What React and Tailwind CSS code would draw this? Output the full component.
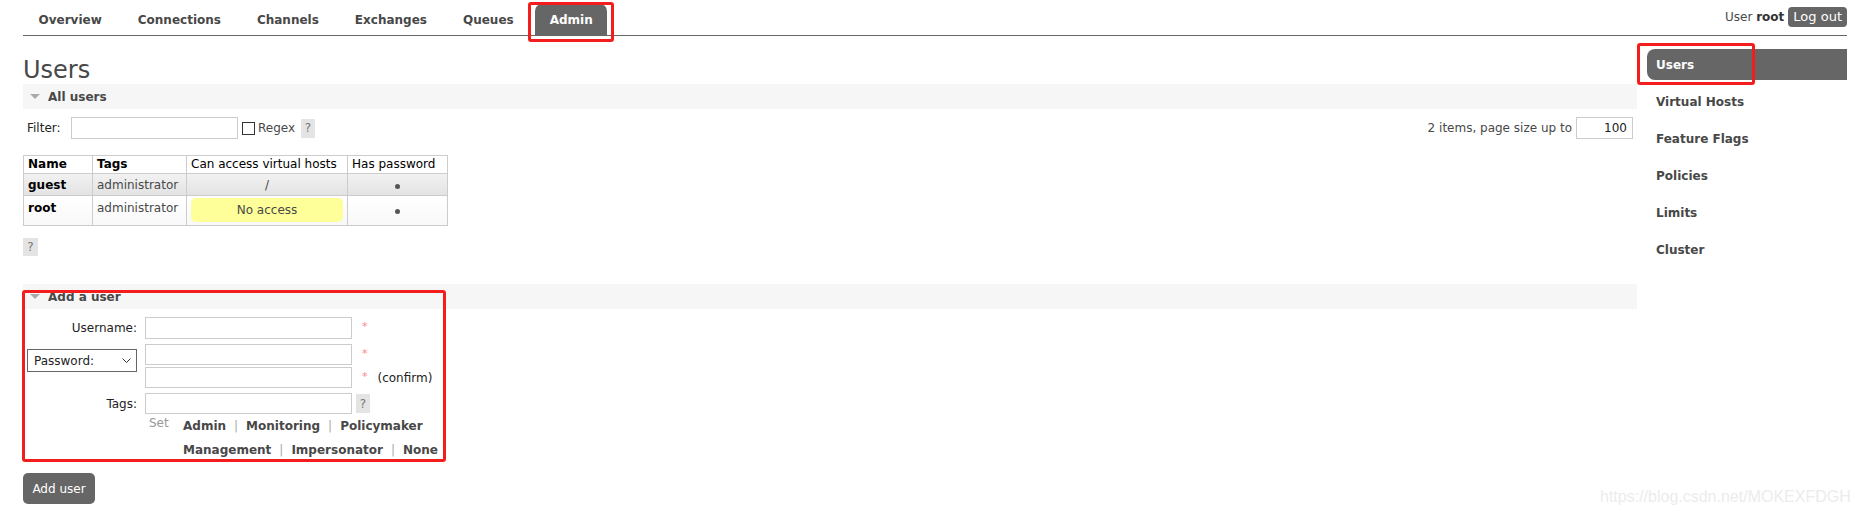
import React from "react";

const Help = ({ className = "" }) => (
  <span className={"inline-flex items-center justify-center bg-[#e4e4e4] text-[#777] text-[12px] " + className}>?</span>
);

const Triangle = () => (
  <svg width="10" height="6" viewBox="0 0 10 6" className="ml-[7px]">
    <polygon points="0,0 10,0 5,5" fill="#aaaaaa" />
  </svg>
);

const Mand = () => (
  <span className="self-start mt-[4px] ml-[10px] text-[#f88] text-[11px] leading-none">*</span>
);

const Dot = () => <span className="inline-block w-[5px] h-[5px] rounded-full bg-[#555]" />;

export default function App() {
  const tabs = ["Overview", "Connections", "Channels", "Exchanges", "Queues", "Admin"];
  const side = ["Virtual Hosts", "Feature Flags", "Policies", "Limits", "Cluster"];
  return (
    <div className="relative w-[1857px] h-[516px] overflow-hidden bg-white font-['DejaVu_Sans','Verdana',sans-serif] text-[12px] text-[#484848]">
      {/* header */}
      <div className="ml-[23px] mr-[10px] h-[36px] flex items-end justify-between border-b border-[#666]">
        <ul className="flex gap-[7px] ml-[1px]">
          {tabs.map((t) => (
            <li
              key={t}
              className={
                "h-[31px] px-[14.5px] flex items-center font-bold rounded-t-[7px] " +
                (t === "Admin" ? "bg-[#666] text-white" : "text-[#484848]")
              }
            >
              {t}
            </li>
          ))}
        </ul>
        <div className="mb-[8px] flex items-center gap-[4px]">
          <span>
            User <b className="text-[#333]">root</b>
          </span>
          <span className="h-[20px] px-[5px] flex items-center rounded-[4px] bg-[#666] text-white text-[13px]">Log out</span>
        </div>
      </div>

      <div className="flex">
        {/* main */}
        <div className="ml-[23px] w-[1614px]">
          <h1 className="mt-[20px] text-[24px] leading-[28px] font-normal text-[#484848]">Users</h1>
          <div className="h-[25px] bg-[#f6f6f6] flex items-center">
            <Triangle />
            <span className="ml-[8px] font-bold">All users</span>
          </div>

          <div className="mt-[8px] h-[22px] flex items-center justify-between">
            <div className="flex items-center pl-[4px]">
              <span className="w-[36px] text-[#222]">Filter:</span>
              <span className="ml-[8px] w-[167px] h-[22px] border border-[#ccc] bg-white" />
              <span className="ml-[4px] w-[13px] h-[13px] border border-[#333] bg-white" />
              <span className="ml-[3px] w-[40px]">Regex</span>
              <Help className="ml-[3px] w-[14px] h-[19px]" />
            </div>
            <div className="flex items-center mr-[4px]">
              <span>2 items, page size up to</span>
              <span className="ml-[4px] w-[57px] h-[22px] border border-[#ccc] flex items-center justify-end pr-[5px] text-[#222]">100</span>
            </div>
          </div>

          <table className="mt-[16px] border-collapse table-fixed w-[424px]">
            <colgroup>
              <col className="w-[69px]" />
              <col className="w-[94px]" />
              <col className="w-[161px]" />
              <col className="w-[100px]" />
            </colgroup>
            <thead>
              <tr className="h-[18px] bg-white">
                <th className="border border-[#ccc] px-[4px] text-left font-bold text-black leading-[15px]">Name</th>
                <th className="border border-[#ccc] px-[4px] text-left font-bold text-black leading-[15px]">Tags</th>
                <th className="border border-[#ccc] px-[4px] text-left font-normal text-black leading-[15px] whitespace-nowrap">Can access virtual hosts</th>
                <th className="border border-[#ccc] px-[4px] text-left font-normal text-black leading-[15px] whitespace-nowrap">Has password</th>
              </tr>
            </thead>
            <tbody>
              <tr className="h-[22px] bg-gradient-to-b from-[#f2f2f2] to-[#e2e2e2]">
                <td className="border border-[#ccc] px-[4px] font-bold text-black">guest</td>
                <td className="border border-[#ccc] px-[4px]">administrator</td>
                <td className="border border-[#ccc] px-[4px] text-center">/</td>
                <td className="border border-[#ccc] px-[4px] text-center leading-none"><Dot /></td>
              </tr>
              <tr className="h-[30px] bg-gradient-to-b from-white to-[#f8f8f8]">
                <td className="border border-[#ccc] px-[4px] pt-[3px] align-top font-bold text-black">root</td>
                <td className="border border-[#ccc] px-[4px] pt-[3px] align-top">administrator</td>
                <td className="border border-[#ccc] px-[4px] py-[2px] align-top">
                  <div className="h-[24px] rounded-[5px] bg-[#ffff99] flex items-center justify-center">No access</div>
                </td>
                <td className="border border-[#ccc] px-[4px] pt-[8px] align-top text-center leading-none"><Dot /></td>
              </tr>
            </tbody>
          </table>

          <Help className="mt-[12px] w-[15px] h-[18px]" />

          <div className="mt-[28px] h-[25px] bg-[#f6f6f6] flex items-center">
            <Triangle />
            <span className="ml-[8px] font-bold">Add a user</span>
          </div>

          {/* form */}
          <div className="mt-[8px] ml-[4px]">
            <div className="flex items-center">
              <span className="w-[110px] text-right text-[#222]">Username:</span>
              <span className="ml-[8px] w-[207px] h-[22px] border border-[#ccc] bg-white" />
              <Mand />
            </div>
            <div className="mt-[5px] flex items-start">
              <div className="mt-[5px] w-[110px] h-[23px] border border-[#666] bg-white flex items-center justify-between pl-[6px] pr-[5px] text-[#222]">
                <span>Password:</span>
                <svg width="9" height="6" viewBox="0 0 9 6">
                  <polyline points="0.5,0.5 4.5,4.5 8.5,0.5" fill="none" stroke="#333" strokeWidth="1" />
                </svg>
              </div>
              <div className="ml-[8px] flex flex-col gap-[2px]">
                <div className="flex items-center">
                  <span className="w-[207px] h-[21px] border border-[#ccc] bg-white" />
                  <Mand />
                </div>
                <div className="flex items-center">
                  <span className="w-[207px] h-[21px] border border-[#ccc] bg-white" />
                  <Mand />
                  <span className="ml-[10px] text-[#222]">(confirm)</span>
                </div>
              </div>
            </div>
            <div className="mt-[5px] flex items-center">
              <span className="w-[110px] text-right text-[#222]">Tags:</span>
              <span className="ml-[8px] w-[207px] h-[21px] border border-[#ccc] bg-white" />
              <Help className="ml-[4px] w-[14px] h-[19px]" />
            </div>
            <div className="flex items-start pl-[118px]">
              <span className="pl-[4px] w-[38px] leading-[14px] mt-[2px] text-[#999]">Set</span>
              <div className="flex flex-col font-bold">
                <div className="h-[24px] flex items-center">
                  <span>Admin</span>
                  <span className="mx-[8px] font-normal text-[#aaa]">|</span>
                  <span>Monitoring</span>
                  <span className="mx-[8px] font-normal text-[#aaa]">|</span>
                  <span>Policymaker</span>
                </div>
                <div className="h-[23px] flex items-center">
                  <span>Management</span>
                  <span className="mx-[8px] font-normal text-[#aaa]">|</span>
                  <span>Impersonator</span>
                  <span className="mx-[8px] font-normal text-[#aaa]">|</span>
                  <span>None</span>
                </div>
              </div>
            </div>
          </div>

          <button className="mt-[12px] h-[31px] w-[72px] rounded-[5px] bg-[#666] text-white text-[12px] flex items-center justify-center">
            Add user
          </button>
        </div>

        {/* sidebar */}
        <div className="ml-[10px] w-[200px] mt-[13px] flex flex-col gap-[6px]">
          <div className="h-[31px] pl-[9px] flex items-center rounded-l-[8px] bg-[#666] text-white font-bold">Users</div>
          {side.map((s) => (
            <div key={s} className="h-[31px] pl-[9px] flex items-center font-bold">
              {s}
            </div>
          ))}
        </div>
      </div>

      {/* annotation overlays */}
      <div className="absolute left-[528px] top-[2px] w-[86px] h-[40px] border-[3px] border-[#f41d1d] rounded-[3px]" />
      <div className="absolute left-[1637px] top-[43px] w-[118px] h-[42px] border-[3px] border-[#f41d1d] rounded-[3px]" />
      <div className="absolute left-[22px] top-[290px] w-[424px] h-[172px] border-[3px] border-[#f41d1d] rounded-[3px]" />

      {/* watermark */}
      <div className="absolute left-[1600px] top-[487px] font-['Liberation_Sans',Arial,sans-serif] text-[16px] leading-[20px] text-[#ececec]">
        https://blog.csdn.net/MOKEXFDGH
      </div>
    </div>
  );
}
